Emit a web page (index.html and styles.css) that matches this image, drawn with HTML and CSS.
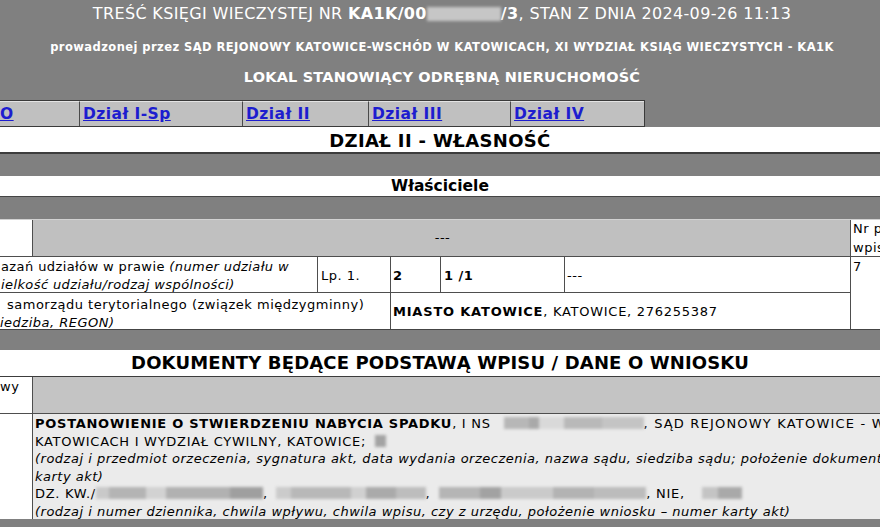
FILE: index.html
```html
<!DOCTYPE html>
<html lang="pl">
<head>
<meta charset="utf-8">
<title>Treść księgi wieczystej</title>
<link rel="stylesheet" href="styles.css">
</head>
<body>
<div class="page">
  <header class="head">
    <div class="title">TREŚĆ KSIĘGI WIECZYSTEJ NR <b>KA1K/00</b><span class="blur blur-title"></span><b>/3</b>, STAN Z DNIA 2024-09-26 11:13</div>
    <div class="court">prowadzonej przez SĄD REJONOWY KATOWICE-WSCHÓD W KATOWICACH, XI WYDZIAŁ KSIĄG WIECZYSTYCH - KA1K</div>
    <div class="kind">LOKAL STANOWIĄCY ODRĘBNĄ NIERUCHOMOŚĆ</div>
  </header>

  <nav class="tabs">
    <div class="tab t0"><a href="#">O</a></div>
    <div class="tab t1"><a href="#">Dział I-Sp</a></div>
    <div class="tab t2"><a href="#">Dział II</a></div>
    <div class="tab t3"><a href="#">Dział III</a></div>
    <div class="tab t4"><a href="#">Dział IV</a></div>
  </nav>

  <div class="strip big">DZIAŁ II - WŁASNOŚĆ</div>
  <div class="bar"></div>
  <div class="strip mid">Właściciele</div>
  <div class="bar"></div>

  <div class="owners">
    <div class="cell a1"></div>
    <div class="cell a2 grey">---</div>
    <div class="cell a7">Nr podstawy<br>wpisu</div>

    <div class="cell b1">azań udziałów w prawie <i>(numer udziału w</i><br><i>ielkość udziału/rodzaj wspólności)</i></div>
    <div class="cell b3">Lp. 1.</div>
    <div class="cell b4"><b>2</b></div>
    <div class="cell b5"><b>1 /1</b></div>
    <div class="cell b6">---</div>
    <div class="cell b7">7</div>

    <div class="cell c1"><span class="ind">samorządu terytorialnego (związek międzygminny)</span><br><i>iedziba, REGON)</i></div>
    <div class="cell c4"><b>MIASTO KATOWICE</b><span class="caps">, KATOWICE, 276255387</span></div>
  </div>

  <div class="bar short"></div>
  <div class="strip docs-title">DOKUMENTY BĘDĄCE PODSTAWĄ WPISU / DANE O WNIOSKU</div>

  <div class="docs">
    <div class="cell d1">wy</div>
    <div class="cell d2"></div>
    <div class="cell e1"></div>
    <div class="cell e2">
      <div class="ln"><b>POSTANOWIENIE O STWIERDZENIU NABYCIA SPADKU</b><span class="caps">, I NS </span><span class="blur bl-ns"></span><span class="wide">, SĄD REJONOWY KATOWICE - WSCHÓD W</span></div>
      <div class="ln caps">KATOWICACH I WYDZIAŁ CYWILNY, KATOWICE; <span class="blur bl-sq"></span></div>
      <div class="ln"><i>(rodzaj i przedmiot orzeczenia, sygnatura akt, data wydania orzeczenia, nazwa sądu, siedziba sądu; położenie dokumentu – numer</i></div>
      <div class="ln"><i>karty akt)</i></div>
      <div class="ln caps">DZ. KW./<span class="blur bl-a"></span>, <span class="blur bl-b"></span>, <span class="blur bl-c"></span>, NIE, <span class="blur bl-d"></span></div>
      <div class="ln"><i>(rodzaj i numer dziennika, chwila wpływu, chwila wpisu, czy z urzędu, położenie wniosku – numer karty akt)</i></div>
    </div>
  </div>
</div>
</body>
</html>
```

FILE: styles.css
```css
* { box-sizing: border-box; }
html, body { margin: 0; padding: 0; }
body {
  background: #808080;
  font-family: "DejaVu Sans", Verdana, sans-serif;
  color: #000;
}
.page { width: 880px; height: 527px; overflow: hidden; }

/* header */
.head { color: #fff; text-align: center; padding-left: 4px; }
.title {
  height: 27px; line-height: 27px;
  font-size: 16px; letter-spacing: 0.35px; white-space: nowrap;
}
.court {
  margin-top: 9px; line-height: 22px;
  font-size: 11.5px; font-weight: bold; letter-spacing: 0.43px; white-space: nowrap;
}
.kind {
  margin-top: 8px; line-height: 23px;
  font-size: 14.5px; font-weight: bold; letter-spacing: 0.18px;
}

/* blurred redactions */
.blur { display: inline-block; vertical-align: -1px; filter: blur(1.4px); }
.blur-title { width: 74px; height: 14px; background: #c6c6c6; vertical-align: -2px; }
.bl-ns { width: 140px; height: 12px; margin-left: 8px;
  background: linear-gradient(90deg, #b7b7b7 0 18%, #a9a9a9 18% 25%, #d9d9d9 25% 43%, #b9b9b9 43% 70%, #c4c4c4 70% 100%); }
.bl-sq { width: 11px; height: 12px; margin-left: 4px; background: #a3a3a3; }
.bl-a { width: 167px; height: 12px;
  background: linear-gradient(90deg, #c9c9c9 0 8%, #b4b4b4 8% 30%, #d2d2d2 30% 42%, #b1b1b1 42% 80%, #9f9f9f 80% 100%); }
.bl-b { width: 150px; height: 12px; margin-left: 3px;
  background: linear-gradient(90deg, #cbcbcb 0 10%, #b8b8b8 10% 50%, #d0d0d0 50% 60%, #aaaaaa 60% 80%, #bdbdbd 80% 100%); }
.bl-c { width: 207px; height: 12px; margin-left: 4px;
  background: linear-gradient(90deg, #b5b5b5 0 20%, #a2a2a2 20% 30%, #cacaca 30% 55%, #b3b3b3 55% 75%, #bcbcbc 75% 100%); }
.bl-d { width: 40px; height: 12px; margin-left: 12px; background: linear-gradient(90deg, #c4c4c4 0 40%, #a9a9a9 40% 100%); }

/* tabs */
.tabs {
  margin-top: 11px;
  display: flex; width: 645px; height: 27px;
  background: #c0c0c0;
  border: 1px solid #3a3a3a; border-left: 0;
}
.tab {
  border-right: 1px solid #4a4a4a;
  border-top: 1px solid #e4e4e4;
  padding-left: 3px;
  line-height: 24px;
  font-size: 15.5px; font-weight: bold; letter-spacing: 0.45px;
  white-space: nowrap;
}
.tab a { color: #1d1dcf; text-decoration: underline; }
.t0 { width: 80px; padding-left: 0; }
.t1 { width: 163px; }
.t2 { width: 126px; }
.t3 { width: 142px; }
.t4 { width: 133px; border-right: 0; }

/* strips and bars */
.strip { background: #fff; text-align: center; font-weight: bold; white-space: nowrap; }
.big {
  height: 27px; padding-top: 3px; line-height: 22px;
  font-size: 18px; letter-spacing: 0.35px;
  border-bottom: 2px solid #3c3c3c;
}
.mid {
  height: 21px; line-height: 20px;
  font-size: 15.5px;
  border-bottom: 1px solid #444;
}
.bar { height: 22px; }
.bar.short { height: 20px; }
.docs-title {
  height: 27px; line-height: 26px;
  font-size: 18px; letter-spacing: 0.14px;
  border-bottom: 1px solid #3c3c3c;
}

/* tables */
.owners, .docs {
  display: grid; gap: 1px;
  background: #4e4e4e;
  font-size: 13px; line-height: 18px; letter-spacing: 0.5px;
}
.owners {
  width: 960px;
  grid-template-columns: 32px 284px 72px 49px 123px 285px 110px;
  grid-template-rows: 36px 35px 36px;
  border-top: 1px solid #d2d2d2;
  border-bottom: 1px solid #444;
}
.cell { background: #fff; white-space: nowrap; overflow: hidden; padding-left: 2px; }
.grey { background: #c0c0c0; }
.caps { letter-spacing: 0.72px; }
.wide { letter-spacing: 1.2px; }
.a1 { grid-column: 1; }
.a2 { grid-column: 2 / 7; display: flex; align-items: center; justify-content: center; }
.a7 { grid-column: 7; display: flex; align-items: center; line-height: 19px; }
.b1 { grid-column: 1 / 3; padding: 1px 0 0 1px; letter-spacing: 0.4px; }
.b3, .b4, .b5, .b6 { display: flex; align-items: center; padding-top: 2px; }
.b3 { grid-column: 3; padding-left: 3px; }
.b4 { grid-column: 4; }
.b5 { grid-column: 5; padding-left: 3px; }
.b6 { grid-column: 6; }
.b7 { grid-column: 7; grid-row: 2 / 4; padding-top: 1px; }
.c1 { grid-column: 1 / 4; padding: 3px 0 0 0; }
.ind { padding-left: 7px; }
.c4 { grid-column: 4 / 7; display: flex; align-items: center; padding-top: 1px; }
.c4 b { letter-spacing: 0.8px; }

.docs {
  width: 960px;
  grid-template-columns: 32px 927px;
  grid-template-rows: 36px 105px;
}
.d1 { padding-top: 1px; padding-left: 0; }
.d2 { background: #c4c4c4; }
.e2 { background: #ebebeb; padding: 1px 0 0 2px; line-height: 17.6px; }
.e2 b { letter-spacing: 0.73px; }
.ln { white-space: nowrap; }
```
